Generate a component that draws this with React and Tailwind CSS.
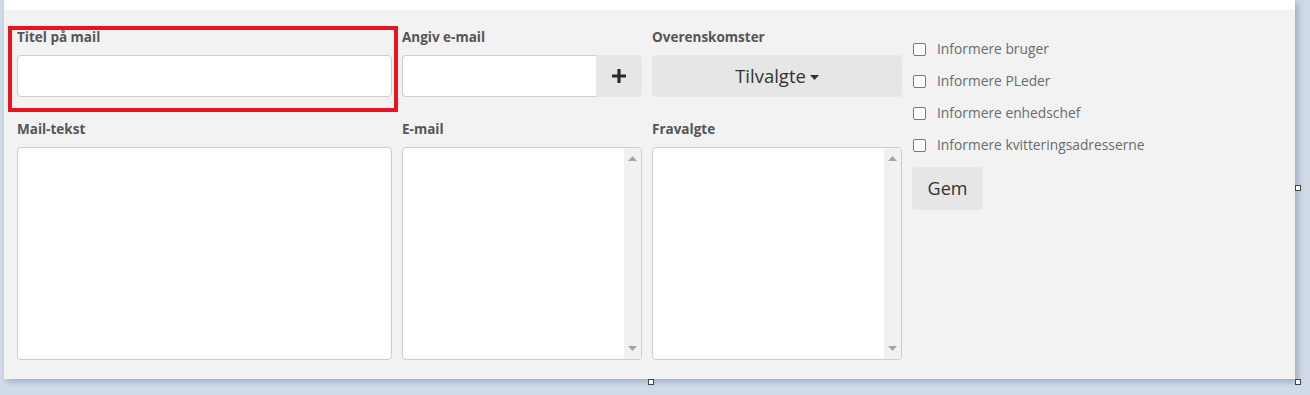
import { useState } from 'react';

function Label({ children }) {
  return (
    <div className="h-[18px] text-[13.5px] leading-[18px] font-bold text-[#555555]">{children}</div>
  );
}

function ListBox() {
  return (
    <div className="flex h-[213px] rounded-[4px] border border-[#cccccc] bg-white overflow-hidden">
      <div className="flex-1" />
      <div className="w-[17px] bg-[#f1f1f1] flex flex-col items-center justify-between py-[8px]">
        <svg width="9" height="5" viewBox="0 0 9 5"><path d="M0 5 L4.5 0 L9 5 Z" fill="#a3a3a3" /></svg>
        <svg width="9" height="5" viewBox="0 0 9 5"><path d="M0 0 L4.5 5 L9 0 Z" fill="#a3a3a3" /></svg>
      </div>
    </div>
  );
}

const checks = [
  'Informere bruger',
  'Informere PLeder',
  'Informere enhedschef',
  'Informere kvitteringsadresserne',
];

export default function App() {
  const [checked, setChecked] = useState({});

  return (
    <div className="relative w-[1310px] h-[395px] overflow-hidden bg-[#d0dae8] font-['Open_Sans',sans-serif]">
      <div className="ml-[4px] w-[1291px] shadow-[3px_3px_6px_rgba(70,90,130,0.35)]">
        <div className="h-[10px] bg-white" />
        <div className="h-[369px] bg-[#f2f2f2] flex gap-[10px] pl-[13px] pt-[18px]">
          {/* Column 1 */}
          <div className="w-[375px] flex flex-col">
            <Label>Titel på mail</Label>
            <input className="mt-[9px] h-[42px] rounded-[4px] border border-[#cccccc] bg-white outline-none" />
            <div className="mt-[23px]"><Label>Mail-tekst</Label></div>
            <textarea className="mt-[9px] h-[213px] resize-none rounded-[4px] border border-[#cccccc] bg-white outline-none" />
          </div>

          {/* Column 2 */}
          <div className="w-[240px] flex flex-col">
            <Label>Angiv e-mail</Label>
            <div className="mt-[9px] h-[42px] flex">
              <input className="w-[194px] h-full rounded-l-[4px] border border-r-0 border-[#cccccc] bg-white outline-none" />
              <button className="flex-1 h-full rounded-r-[4px] bg-[#e6e6e6] flex items-center justify-center">
                <svg width="14" height="14" viewBox="0 0 14 14"><path d="M5.4 0h3.2v5.4H14v3.2H8.6V14H5.4V8.6H0V5.4h5.4z" fill="#2b2b2b" /></svg>
              </button>
            </div>
            <div className="mt-[23px]"><Label>E-mail</Label></div>
            <div className="mt-[9px]"><ListBox /></div>
          </div>

          {/* Column 3 */}
          <div className="w-[250px] flex flex-col">
            <Label>Overenskomster</Label>
            <button className="mt-[9px] h-[42px] rounded-[4px] bg-[#e6e6e6] flex items-center justify-center gap-[4px] text-[18.5px] text-[#333333]">
              Tilvalgte
              <svg width="9" height="5" viewBox="0 0 9 5" className="mt-[2px]"><path d="M0 0 L4.5 5 L9 0 Z" fill="#333333" /></svg>
            </button>
            <div className="mt-[23px]"><Label>Fravalgte</Label></div>
            <div className="mt-[9px]"><ListBox /></div>
          </div>

          {/* Column 4 */}
          <div className="flex flex-col pt-[5px]">
            {checks.map((c) => (
              <label key={c} className="h-[32px] flex items-center gap-[11px] text-[13.8px] text-[#6b6b6b] cursor-pointer">
                <span
                  onClick={() => setChecked((p) => ({ ...p, [c]: !p[c] }))}
                  className="ml-[1px] w-[13px] h-[13px] rounded-[2px] border border-[#767676] bg-white"
                />
                {c}
              </label>
            ))}
            <button className="mt-[6px] w-[71px] h-[43px] rounded-[4px] bg-[#e6e6e6] text-[18px] text-[#333333]">Gem</button>
          </div>
        </div>
      </div>

      {/* Focus highlight */}
      <div className="absolute left-[8px] top-[26px] w-[390px] h-[86px] border-[4px] border-[#e8141f] pointer-events-none" />

      {/* Resize handles */}
      <div className="absolute left-[648px] top-[379px] w-[6px] h-[6px] border border-[#444444] bg-white" />
      <div className="absolute left-[1295px] top-[185px] w-[6px] h-[6px] border border-[#444444] bg-white" />
      <div className="absolute left-[1295px] top-[379px] w-[6px] h-[6px] border border-[#444444] bg-white" />
    </div>
  );
}
